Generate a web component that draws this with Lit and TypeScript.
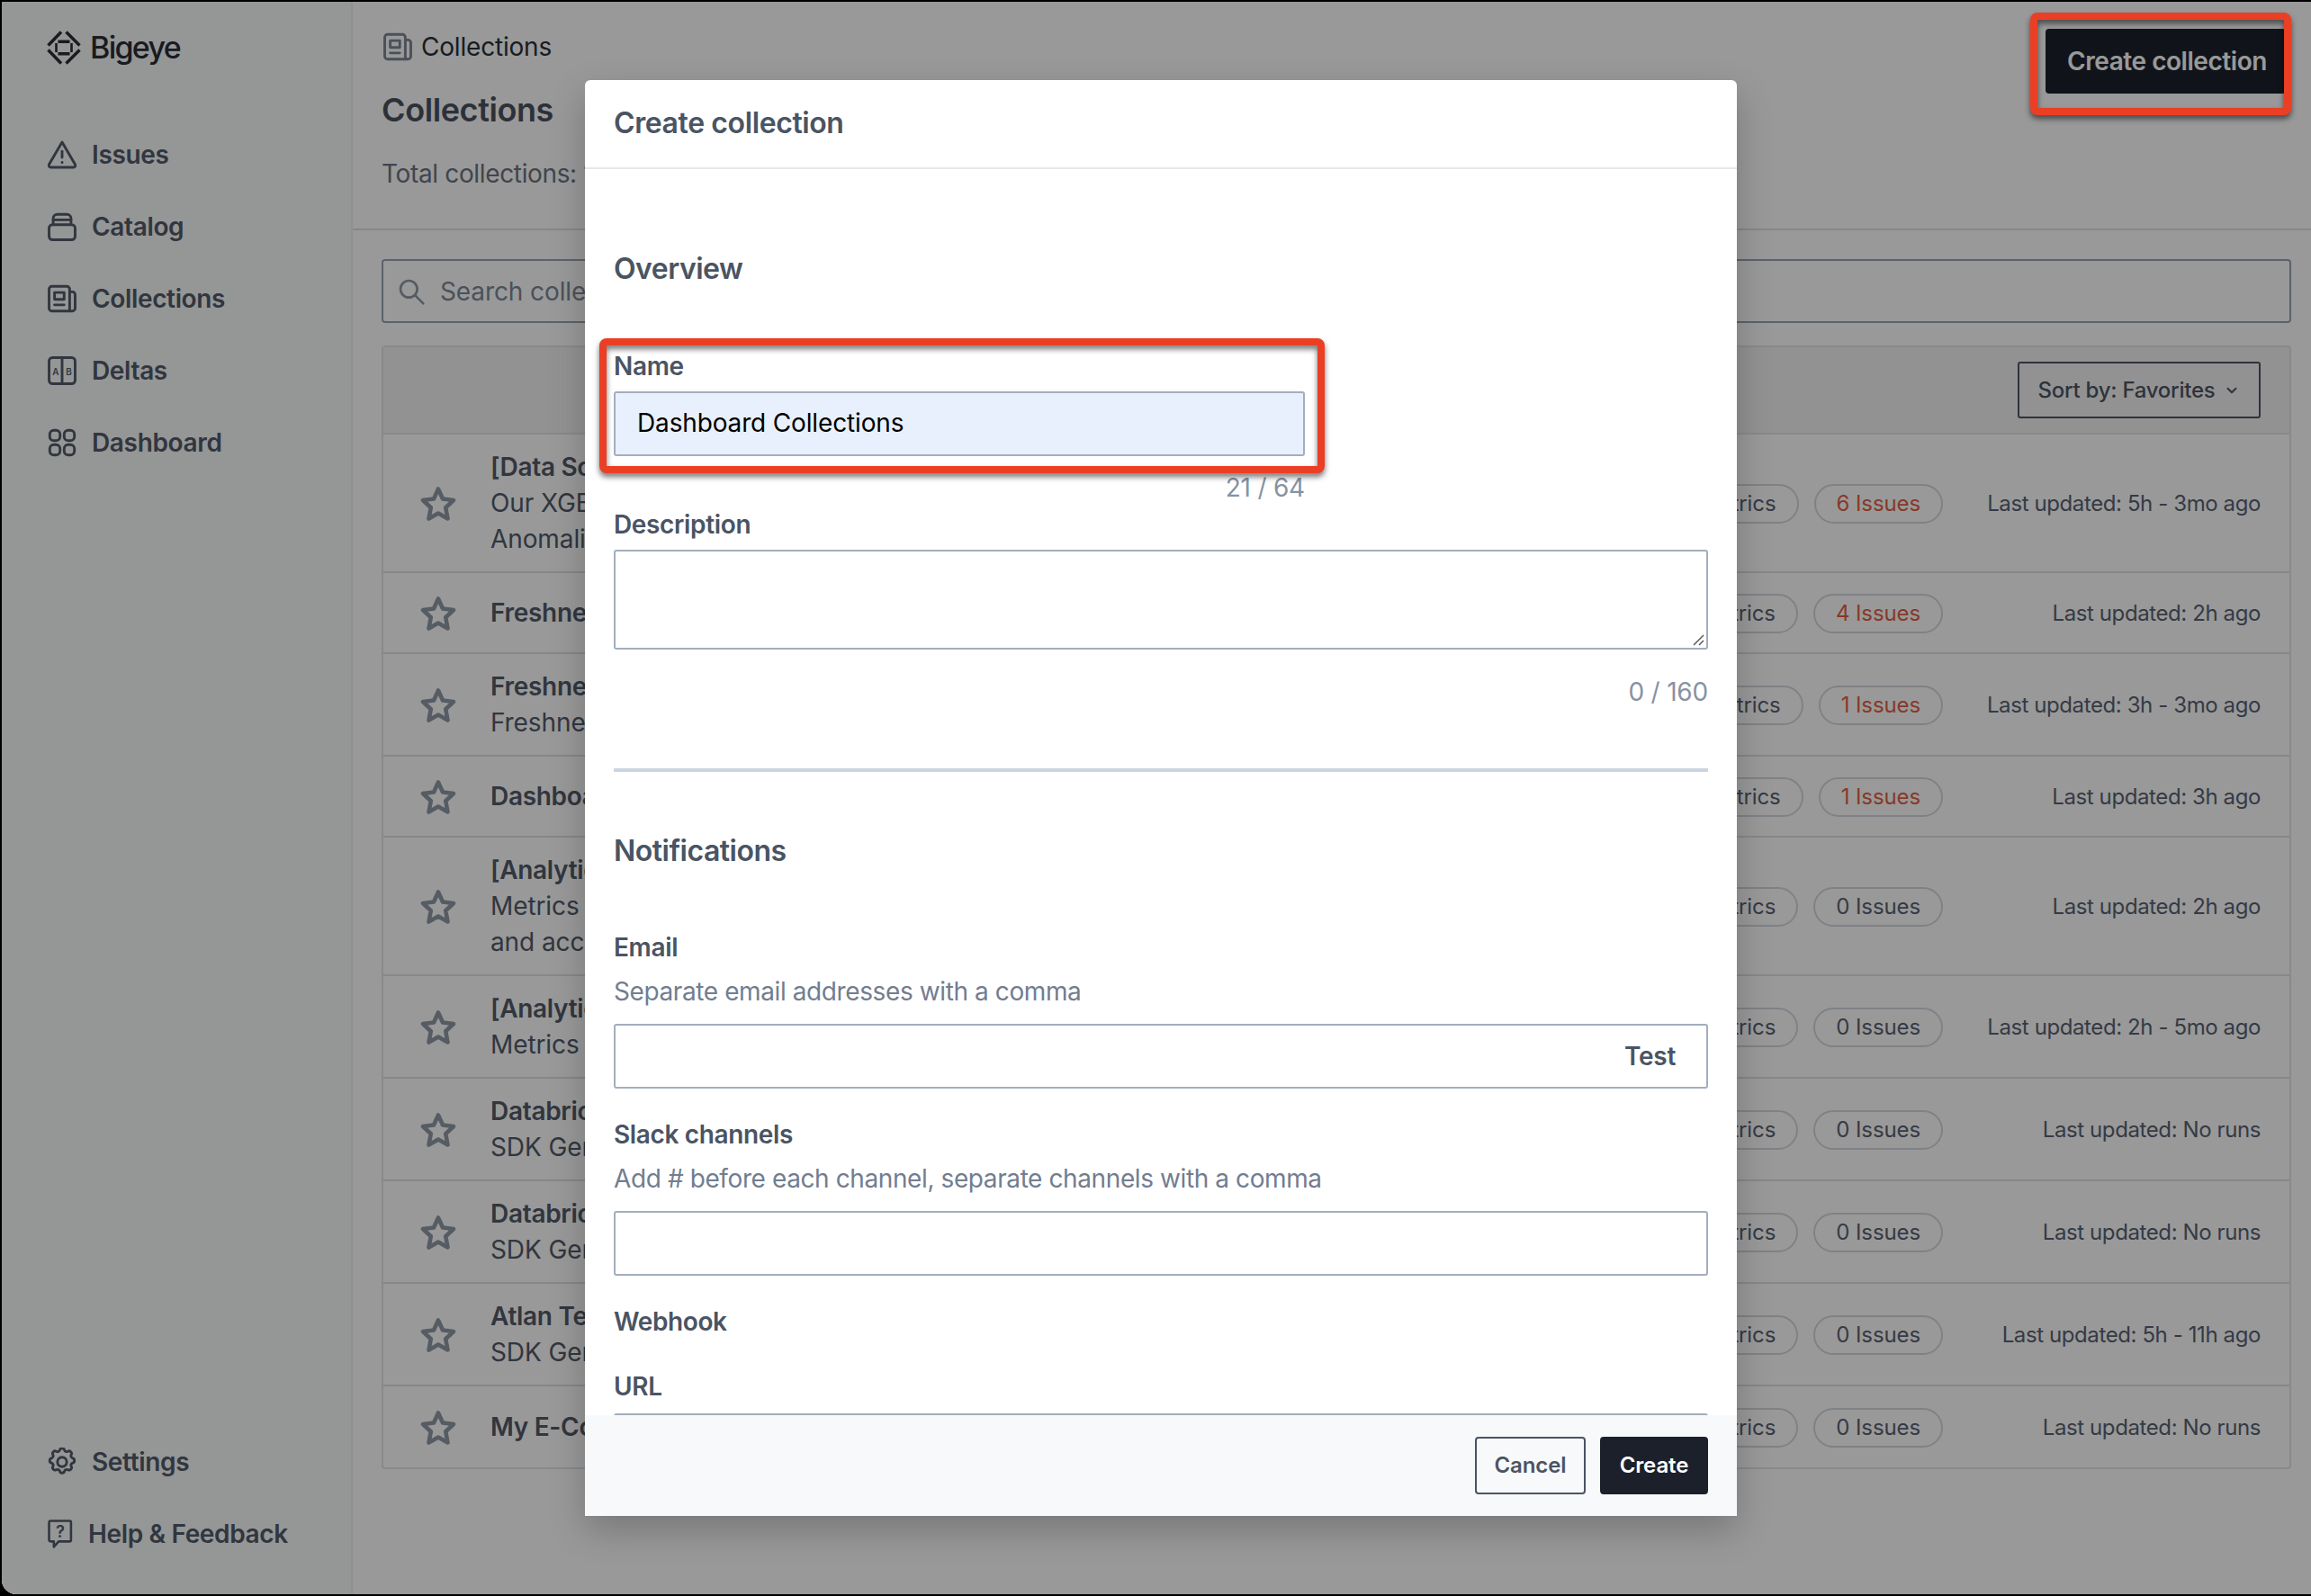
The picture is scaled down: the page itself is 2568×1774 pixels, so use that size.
import { LitElement, html, css, svg } from "lit";
import { customElement } from "lit/decorators.js";

interface Row { lines: string[]; metrics: string; issues: number; updated: string; }

const ROWS: Row[] = [
  { lines: ["[Data Science]", "Our XGBoost", "Anomalies"], metrics: "12 Metrics", issues: 6, updated: "Last updated: 5h - 3mo ago" },
  { lines: ["Freshness"], metrics: "12 Metrics", issues: 4, updated: "Last updated: 2h ago" },
  { lines: ["Freshness", "Freshness"], metrics: "8 Metrics", issues: 1, updated: "Last updated: 3h - 3mo ago" },
  { lines: ["Dashboard"], metrics: "8 Metrics", issues: 1, updated: "Last updated: 3h ago" },
  { lines: ["[Analytics]", "Metrics", "and accuracy"], metrics: "6 Metrics", issues: 0, updated: "Last updated: 2h ago" },
  { lines: ["[Analytics]", "Metrics"], metrics: "6 Metrics", issues: 0, updated: "Last updated: 2h - 5mo ago" },
  { lines: ["Databricks", "SDK Generated"], metrics: "6 Metrics", issues: 0, updated: "Last updated: No runs" },
  { lines: ["Databricks", "SDK Generated"], metrics: "6 Metrics", issues: 0, updated: "Last updated: No runs" },
  { lines: ["Atlan Test", "SDK Generated"], metrics: "6 Metrics", issues: 0, updated: "Last updated: 5h - 11h ago" },
  { lines: ["My E-Commerce"], metrics: "6 Metrics", issues: 0, updated: "Last updated: No runs" },
];

const ic = (body: unknown, cls = "ic") => html`<svg class=${cls} viewBox="1.500 1.500 21 21" fill="none" stroke="currentColor" stroke-width="1.900" stroke-linecap="round" stroke-linejoin="round">${body}</svg>`;

const newspaper = svg`<path d="M2.500 5a2 2 0 0 1 2-2h11a2 2 0 0 1 2 2v16h-13a2 2 0 0 1-2-2z"/><path d="M17.500 7h2a2 2 0 0 1 2 2v10a2 2 0 0 1-2 2h-2"/><rect x="6.500" y="7.500" width="7" height="5"/><path d="M6.500 16.500h7"/>`;

const ICONS = {
  issues: svg`<path d="M12 2.800 2.500 19a1.500 1.500 0 0 0 1.300 2.200h16.400a1.500 1.500 0 0 0 1.300-2.200z"/><path d="M12 9.500v4.500"/><path d="M12 17.500v.2"/>`,
  catalog: svg`<rect x="2.500" y="10.500" width="19" height="11" rx="2.500"/><path d="M5.500 10.500V6a3 3 0 0 1 3-3h7a3 3 0 0 1 3 3v4.500"/><path d="M5.500 7h13"/>`,
  collections: newspaper,
  deltas: svg`<rect x="2.500" y="2.500" width="19" height="19" rx="2.500"/><path d="M12 2.500v19"/><text x="7.200" y="15" font-size="6.500" text-anchor="middle" fill="currentColor" stroke="none" font-family="Inter, sans-serif">A</text><text x="16.800" y="15" font-size="6.500" text-anchor="middle" fill="currentColor" stroke="none" font-family="Inter, sans-serif">B</text>`,
  dashboard: svg`<rect x="3" y="3" width="7.500" height="7.500" rx="3"/><rect x="13.500" y="3" width="7.500" height="7.500" rx="3"/><rect x="3" y="13.500" width="7.500" height="7.500" rx="3"/><rect x="13.500" y="13.500" width="7.500" height="7.500" rx="3"/>`,
  settings: svg`<path d="M10.300 3.200c.4-1.600 3-1.600 3.400 0a1.800 1.800 0 0 0 2.600 1.100c1.400-.9 3.300 1 2.400 2.400a1.800 1.800 0 0 0 1.100 2.600c1.600.4 1.600 3 0 3.400a1.800 1.800 0 0 0-1.100 2.600c.9 1.400-1 3.300-2.400 2.400a1.800 1.800 0 0 0-2.600 1.100c-.4 1.600-3 1.600-3.400 0a1.800 1.800 0 0 0-2.600-1.100c-1.400.9-3.300-1-2.400-2.400a1.800 1.800 0 0 0-1.100-2.600c-1.600-.4-1.600-3 0-3.400a1.800 1.800 0 0 0 1.100-2.600c-.9-1.400 1-3.300 2.400-2.400a1.800 1.800 0 0 0 2.600-1.100z"/><circle cx="12" cy="12" r="3.400"/>`,
  help: svg`<path d="M3.500 2.500h14a1 1 0 0 1 1 1v13a1 1 0 0 1-1 1h-8l-3.500 4v-4h-2.500a1 1 0 0 1-1-1v-13a1 1 0 0 1 1-1z" stroke-width="1.700"/><text x="10.500" y="14.500" font-size="12" font-weight="600" text-anchor="middle" fill="currentColor" stroke="none" font-family="Inter, sans-serif">?</text>`,
};

@customElement("app-root")
export class AppRoot extends LitElement {
  static styles = css`
    :host { display: block; height: 1774px; width: 2568px; overflow: hidden; background: #000; font-family: Inter, "Liberation Sans", sans-serif; font-size: 28px; line-height: 40px; }
    * { box-sizing: border-box; }
    .window { position: absolute; left: 2px; top: 2px; width: 2566px; height: 1770px; display: flex; background: #fff; border-bottom-left-radius: 16px; overflow: hidden; }

    .sidebar { width: 390px; flex: none; background: #f9fafb; border-right: 2px solid #f0f1f4; display: flex; flex-direction: column; padding: 30px 0 47px 51px; color: #535b69; }
    .logo { display: flex; align-items: center; gap: 8px; height: 42px; color: #2a2d36; font-size: 34px; font-weight: 500; letter-spacing: -1.700px; margin-left: -3px; }
    .logo svg { width: 42px; height: 42px; flex: none; }
    .nav { display: flex; flex-direction: column; gap: 40px; margin-top: 78px; }
    .nav.bottom { margin-top: auto; }
    .nav a { display: flex; align-items: center; gap: 17px; height: 40px; font-weight: 600; letter-spacing: -0.350px; }
    .ic { width: 32px; height: 32px; flex: none; }
    .nav a.help { gap: 13px; }

    .main { flex: 1; min-width: 0; display: flex; flex-direction: column; }
    .head { height: 254px; border-bottom: 2px solid #dfe2e8; padding: 30px 28px 0 32px; display: flex; justify-content: space-between; align-items: flex-start; }
    .crumb { display: flex; align-items: center; gap: 10px; height: 40px; color: #2b2f38; letter-spacing: -0.200px; padding-left: 2px; }
    .crumb svg { color: #7d8694; }
    h1 { margin: 25px 0 0; font-size: 36px; line-height: 50px; font-weight: 600; color: #4a5260; letter-spacing: -0.400px; }
    .total { margin-top: 26px; color: #6b7484; letter-spacing: -0.350px; }
    .cta { width: 267px; height: 72px; display: flex; align-items: center; justify-content: center; background: #1c202b; color: #fff; border-radius: 4px; font-weight: 600; letter-spacing: -0.450px; padding-left: 3px; }

    .content { flex: 1; padding: 32px 22px 0 32px; }
    .search { height: 71px; border: 2px solid #9aa3b2; border-radius: 4px; display: flex; align-items: center; padding-left: 15px; gap: 16px; color: #7e8796; letter-spacing: -0.100px; }
    .search svg { width: 32px; height: 32px; color: #8f98a6; }
    .table { margin-top: 25px; border: 2px solid #e3e5ea; border-radius: 4px; }
    .toolbar { height: 97px; background: #f3f4f6; border-bottom: 2px solid #e3e5ea; display: flex; align-items: center; justify-content: flex-end; padding-right: 32px; }
    .sort { width: 270px; height: 63px; border: 2px solid #4d5562; border-radius: 3px; display: flex; align-items: center; justify-content: center; gap: 10px; font-size: 24px; font-weight: 500; color: #4d5562; letter-spacing: -0.250px; }
    .sort svg { width: 18px; height: 18px; }

    .row { display: flex; align-items: center; border-bottom: 2px solid #dfe2e8; padding: 2px 32px 0 41px; }
    .row:last-child { border-bottom: 0; }
    .l1 { height: 90px; } .l2 { height: 114px; } .l3 { height: 154px; }
    .star { width: 40px; height: 40px; flex: none; color: #9099a6; margin-right: 38px; }
    .txt { flex: none; margin-top: -2px; color: #525a69; letter-spacing: -0.100px; white-space: nowrap; }
    .txt .t { font-weight: 600; letter-spacing: -0.300px; }
    .pill { height: 44px; border: 2px solid #d5d8e0; border-radius: 22px; display: flex; align-items: center; padding: 0 23px; font-size: 24px; color: #5a6272; white-space: nowrap; letter-spacing: -0.100px; }
    .pill.red { color: #e25f45; }
    .pill.first { margin-left: auto; }
    .pill + .pill { margin-left: 17px; }
    .upd { width: 353px; text-align: right; font-size: 24px; color: #5a6272; letter-spacing: -0.400px; white-space: nowrap; }

    .overlay { position: absolute; inset: 0; background: rgba(0, 0, 0, 0.4); }
    .modal { position: absolute; left: 648px; top: 87px; width: 1280px; height: 1596px; background: #fff; border-radius: 6px 6px 0 0; box-shadow: 0 16px 40px rgba(0, 0, 0, 0.22); display: flex; flex-direction: column; overflow: hidden; color: #4a5463; }
    .m-head { height: 99px; flex: none; border-bottom: 2px solid #e5e7eb; padding: 0 32px 2px; display: flex; align-items: center; font-size: 32px; font-weight: 600; letter-spacing: -0.400px; }
    .m-body { flex: 1; min-height: 0; overflow: hidden; padding: 0 32px; }
    .sec { font-size: 32px; line-height: 40px; font-weight: 600; letter-spacing: -0.500px; }
    .sec.small { font-size: 28px; letter-spacing: -0.400px; }
    .lab { font-weight: 600; letter-spacing: -0.350px; margin-top: -1px; margin-bottom: 1px; }
    .hint { color: #727d90; letter-spacing: -0.400px; }
    .cnt { text-align: right; color: #8792a2; letter-spacing: -0.200px; }
    .cnt.name { width: 768px; }
    .inp { height: 72px; border: 2px solid #a3aebd; border-radius: 3px; display: flex; align-items: center; justify-content: space-between; padding: 0 24px; }
    .inp.auto { background: #e8f0fe; color: #000; width: 768px; letter-spacing: -0.150px; padding-bottom: 2px; }
    .inp .test { margin-left: auto; margin-right: 10px; font-weight: 600; letter-spacing: -0.300px; }
    .ta { height: 111px; border: 2px solid #a3aebd; border-radius: 3px; position: relative; }
    .ta svg { position: absolute; right: 1px; bottom: 1px; width: 18px; height: 18px; }
    .rule { height: 4px; background: #cbd5e0; }
    .m-foot { height: 112px; flex: none; background: #f7f9fb; display: flex; align-items: center; justify-content: flex-end; gap: 16px; padding: 0 32px; font-size: 24px; }
    .btn { height: 64px; display: flex; align-items: center; justify-content: center; border-radius: 4px; font-weight: 600; letter-spacing: -0.100px; }
    .btn.cancel { width: 123px; border: 2px solid #4a5463; }
    .btn.create { width: 120px; background: #1c202b; color: #fff; }

    .mt91 { margin-top: 91px; } .mt68 { margin-top: 68px; } .mt8 { margin-top: 8px; } .mt15 { margin-top: 15px; } .mt1 { margin-top: 1px; }
    .mt27 { margin-top: 27px; } .mt65 { margin-top: 65px; } .mt67 { margin-top: 67px; } .mt9 { margin-top: 9px; }
    .mt16 { margin-top: 16px; } .mt31 { margin-top: 31px; } .mt32 { margin-top: 32px; } .mt10 { margin-top: 10px; }

    .mark { position: absolute; border: 8px solid #ea3f25; border-radius: 8px; filter: drop-shadow(0 4px 3px rgba(0, 0, 0, 0.55)); }
    .mark.a { left: 2254px; top: 12px; width: 290px; height: 114px; }
    .mark.b { left: 664px; top: 374px; width: 806px; height: 150px; }
  `;

  render() {
    return html`
      <div class="window">
        <aside class="sidebar">
          <div class="logo">
            <svg viewBox="0 0 42 42" fill="#2a2d36" stroke="#2a2d36" stroke-width="3.400">
              <path d="M18 3.500 3.500 18.500" fill="none"/><path d="M23.500 3.500 38.500 18.500" fill="none"/><path d="M3.500 23.500 18 38.500" fill="none"/><path d="M38.500 23.500 23.500 38.500" fill="none"/>
              <path d="M14.500 12.500h13v3.500h-13zM14.500 26h13v3.500h-13z" stroke="none"/>
              <path d="M12.500 16v10M29.500 16v10" fill="none" stroke-width="2.600"/>
            </svg>
            <span>Bigeye</span>
          </div>
          <nav class="nav">
            <a>${ic(ICONS.issues)}Issues</a>
            <a>${ic(ICONS.catalog)}Catalog</a>
            <a>${ic(ICONS.collections)}Collections</a>
            <a>${ic(ICONS.deltas)}Deltas</a>
            <a>${ic(ICONS.dashboard)}Dashboard</a>
          </nav>
          <nav class="nav bottom">
            <a>${ic(ICONS.settings)}Settings</a>
            <a class="help">${ic(ICONS.help)}Help &amp; Feedback</a>
          </nav>
        </aside>
        <main class="main">
          <header class="head">
            <div>
              <div class="crumb">${ic(newspaper)}Collections</div>
              <h1>Collections</h1>
              <div class="total">Total collections: 10</div>
            </div>
            <div class="cta">Create collection</div>
          </header>
          <section class="content">
            <div class="search">
              <svg viewBox="0 0 24 24" fill="none" stroke="currentColor" stroke-width="2" stroke-linecap="round"><circle cx="10" cy="10" r="7"/><path d="m15.500 15.500 6.500 6.500"/></svg>
              <span>Search collections</span>
            </div>
            <div class="table">
              <div class="toolbar">
                <div class="sort">Sort by: Favorites
                  <svg viewBox="0 0 24 24" fill="none" stroke="currentColor" stroke-width="2.600" stroke-linecap="round" stroke-linejoin="round"><path d="m6 9 6 6 6-6"/></svg>
                </div>
              </div>
              ${ROWS.map((r) => html`
                <div class="row l${r.lines.length}">
                  <svg class="star" viewBox="0 0 40 40" fill="none" stroke="currentColor" stroke-width="4.600" stroke-linejoin="round"><path d="M20 3.500 25 14.500 37 16 28.200 24.200 30.500 36.500 20 30.500 9.500 36.500 11.800 24.200 3 16 15 14.500z"/></svg>
                  <div class="txt">
                    ${r.lines.map((l, i) => html`<div class=${i === 0 ? "t" : ""}>${l}</div>`)}
                  </div>
                  <span class="pill first">${r.metrics}</span>
                  <span class="pill ${r.issues ? "red" : ""}">${r.issues} Issues</span>
                  <div class="upd">${r.updated}</div>
                </div>`)}
            </div>
          </section>
        </main>
        <div class="overlay"></div>
        <div class="modal">
          <div class="m-head">Create collection</div>
          <div class="m-body">
            <div class="sec mt91">Overview</div>
            <div class="lab mt68">Name</div>
            <div class="inp auto mt8">Dashboard Collections</div>
            <div class="cnt name mt15">21 / 64</div>
            <div class="lab mt1">Description</div>
            <div class="ta mt8"><svg viewBox="0 0 18 18" stroke="#555" stroke-width="1.400" fill="none"><path d="M5 16 16 5"/><path d="M11 16 16 11"/></svg></div>
            <div class="cnt mt27">0 / 160</div>
            <div class="rule mt65"></div>
            <div class="sec mt68">Notifications</div>
            <div class="lab mt67">Email</div>
            <div class="hint mt9">Separate email addresses with a comma</div>
            <div class="inp mt16"><span class="test">Test</span></div>
            <div class="lab mt31">Slack channels</div>
            <div class="hint mt9">Add # before each channel, separate channels with a comma</div>
            <div class="inp mt16"></div>
            <div class="sec small mt31">Webhook</div>
            <div class="lab mt32">URL</div>
            <div class="inp mt10"></div>
          </div>
          <div class="m-foot">
            <div class="btn cancel">Cancel</div>
            <div class="btn create">Create</div>
          </div>
        </div>
        <div class="mark a"></div>
        <div class="mark b"></div>
      </div>
    `;
  }
}
